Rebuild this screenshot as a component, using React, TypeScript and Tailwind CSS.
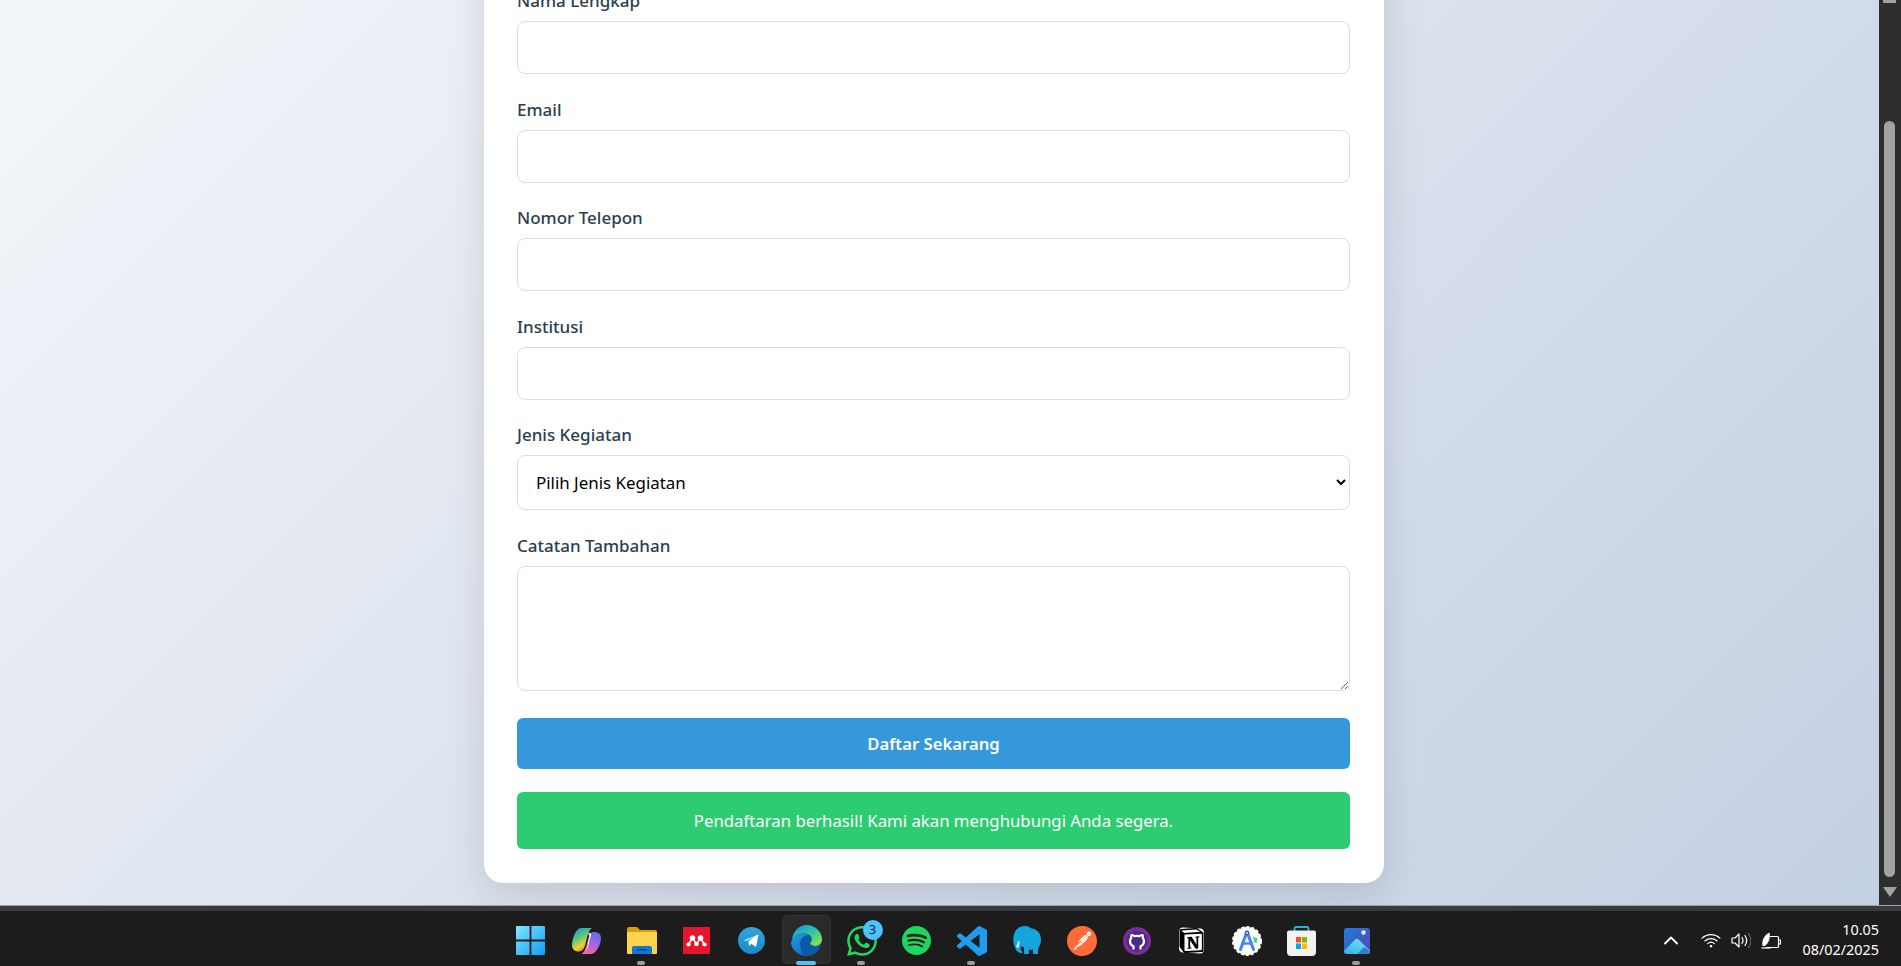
import React from "react";
import { SiPostman, SiSpotify, SiWhatsapp, SiNotion } from "react-icons/si";

const uiFont = "font-['Noto_Sans','Open_Sans',sans-serif]";

function Field({ label, className, children }: { label: string; className: string; children: React.ReactNode }) {
  return (
    <div className={`flex flex-col ${className}`}>
      <label className="mb-[9px] h-[22px] text-[17px] leading-[22px] font-medium text-[#2c3e50]">{label}</label>
      {children}
    </div>
  );
}

const inputClass =
  "h-[53px] w-full rounded-[8px] border border-[#dddddd] bg-white px-[19px] text-[17px] outline-none";

function StartIcon() {
  return (
    <svg className="-ml-[2px]" width="29" height="29" viewBox="0 0 29 29">
      <defs>
        <linearGradient id="win" x1="0" y1="0" x2="1" y2="1">
          <stop offset="0" stopColor="#7fe9ff" />
          <stop offset="1" stopColor="#0f9bf5" />
        </linearGradient>
      </defs>
      <path d="M1 0h12.6v13.6H0V1a1 1 0 0 1 1-1zM15.4 0H28a1 1 0 0 1 1 1v12.6H15.400zM0 15.400h13.600V29H1a1 1 0 0 1-1-1zM15.400 15.400H29V28a1 1 0 0 1-1 1H15.400z" fill="url(#win)" />
    </svg>
  );
}

function CopilotIcon() {
  return (
    <svg width="29" height="26" viewBox="0 0 29 26">
      <defs>
        <linearGradient id="cpA" x1="0.1" y1="0" x2="0.6" y2="1">
          <stop offset="0" stopColor="#1d8fe0" />
          <stop offset="0.45" stopColor="#5fcb78" />
          <stop offset="0.75" stopColor="#f6cf2e" />
          <stop offset="1" stopColor="#ef7a30" />
        </linearGradient>
        <linearGradient id="cpB" x1="0.8" y1="0" x2="0.3" y2="1">
          <stop offset="0" stopColor="#5d6fe4" />
          <stop offset="0.5" stopColor="#a861e2" />
          <stop offset="1" stopColor="#f06c9f" />
        </linearGradient>
      </defs>
      <path d="M21 4c4.500-.5 8 1.500 8 6 0 3.500-1.500 8-3.500 11-1.800 3-4 5-7.500 5H9.500c2.500-2 3.500-4 4.500-7l3-11c.6-2 2-3.800 4-4z" fill="url(#cpB)" />
      <path d="M9.500 0h10.500c-2.500 1.500-3.500 4-4.200 6.500l-3 11.500c-.8 3-2.800 5.500-6.300 5.500-4 0-6.500-2.500-6.500-6.500C0 13 1.500 8.500 3 5.500 4.500 2 6.500 0 9.500 0z" fill="url(#cpA)" />
      <path d="M16 5c2-.5 3.500.3 3.200 2l-3 11c-.6 2.500-2 4.500-3.700 5.500 0 0 2-1.500 2.500-5l2-9c.2-1.500-.3-3.500-1-4.500z" fill="#e9dcf7" />
    </svg>
  );
}

function FolderIcon() {
  return (
    <svg width="30" height="27" viewBox="0 0 30 27">
      <path d="M0 2a2 2 0 0 1 2-2h8l3 3h15a2 2 0 0 1 2 2v3H0z" fill="#d99e0b" />
      <path d="M0 5h30v21a1 1 0 0 1-1 1H1a1 1 0 0 1-1-1z" fill="#fdd34d" />
      <path d="M5 21a2 2 0 0 1 2-2h16a2 2 0 0 1 2 2v6H5z" fill="#0f78d4" />
      <rect x="10" y="22" width="10" height="1.400" fill="#083f78" />
    </svg>
  );
}

function MendeleyIcon() {
  return (
    <svg width="27" height="27" viewBox="0 0 27 27">
      <rect width="27" height="27" fill="#e6152d" />
      <circle cx="9.500" cy="11" r="2.800" fill="#fff" />
      <circle cx="17.500" cy="11" r="2.800" fill="#fff" />
      <circle cx="5.500" cy="17.500" r="2.100" fill="#fff" />
      <circle cx="13.500" cy="17" r="2.300" fill="#fff" />
      <circle cx="21.500" cy="17.500" r="2.100" fill="#fff" />
      <path d="M5.500 17.500 9.500 11l4 6 4-6 4 6.500" fill="none" stroke="#fff" strokeWidth="1.500" />
    </svg>
  );
}

function TelegramIcon() {
  return (
    <svg width="27" height="27" viewBox="0 0 27 27">
      <defs>
        <linearGradient id="tg" x1="0.5" y1="0" x2="0.5" y2="1">
          <stop offset="0" stopColor="#2fa6dc" />
          <stop offset="1" stopColor="#1c88c6" />
        </linearGradient>
      </defs>
      <circle cx="13.500" cy="13.500" r="13.500" fill="url(#tg)" />
      <path d="M5.500 13.500 20.500 7.500 18 20l-4.600-3.300-2.200 2.200-.8-4.700 7-5.200-9 4.700z" fill="#fff" />
    </svg>
  );
}

function EdgeIcon() {
  return (
    <svg width="31" height="31" viewBox="0 0 31 31">
      <defs>
        <linearGradient id="edgeA" x1="0.2" y1="0" x2="0.9" y2="0.8">
          <stop offset="0" stopColor="#1a9bd8" />
          <stop offset="0.55" stopColor="#31c5a5" />
          <stop offset="1" stopColor="#7fe04f" />
        </linearGradient>
        <linearGradient id="edgeB" x1="0" y1="0" x2="0.6" y2="1">
          <stop offset="0" stopColor="#1ea1e6" />
          <stop offset="1" stopColor="#0f6cc0" />
        </linearGradient>
      </defs>
      <path d="M15.500 0C24 0 31 6.500 31 14.500c0 4-3 6.500-7 6.500-3 0-5-1-5-2.500 0-1 1.500-1.500 1.500-4 0-3.500-3-6-7-6C8 8.500 3.500 11 1 15.500 1.500 7 7.500 0 15.500 0z" fill="url(#edgeA)" />
      <path d="M1 15.500C3.500 11 8 8.500 13.500 8.500c2 0 3.800.6 5 1.700C13 10 9.500 14 9.500 18.500c0 5 4 10 9.500 11.800-1.200.4-2.400.7-3.500.7C7 31 0 24 0 17c0-.5.500-1 1-1.500z" fill="url(#edgeB)" />
      <path d="M9.500 18.500c0-4.500 3.500-8.500 9-8.300 1.300 1 2 2.500 2 4.300 0 2.500-1.500 3-1.500 4 0 1.500 2 2.500 5 2.500 2.500 0 4.800-.8 6.200-2.300C29 26 23.500 31 15.500 31c-.5 0-2-.2-3-.8-2-2-3-7-3-11.700z" fill="#0c5aa6" />
    </svg>
  );
}

function ElephantIcon() {
  return (
    <svg width="28" height="29" viewBox="0 0 28 29">
      <path d="M12 0c3 0 5 1 6.500 2.500C23 2.500 28 6.500 28 13.500c0 4-1.500 7-3 9v5.500h-5v-4.500c-1.500.5-3 .5-4 0V28h-5v-7c-1 .5-2 0-2.500-1l-1 2c.2 2 1 3 2 4l-.5 1.500C6 27 3 25 2 21.500 .5 18 0 14 .5 10.500 1.300 4 6 0 12 0z" fill="#14a5dc" />
      <path d="M5 15c-.5 2-1 4-2 5.500l2 2c1-2 1.500-4.500 1.500-7.500z" fill="#cfeefb" />
    </svg>
  );
}

function PostmanIcon() {
  return (
    <span className="relative flex h-[30px] w-[30px] items-center justify-center">
      <span className="absolute h-[26px] w-[26px] rounded-full bg-white" />
      <SiPostman className="relative h-[30px] w-[30px] text-[#ff6c37]" />
    </span>
  );
}

function GithubDesktopIcon() {
  return (
    <svg width="28" height="28" viewBox="0 0 28 28">
      <circle cx="14" cy="14" r="14" fill="#7b2d9e" />
      <circle cx="14" cy="14" r="10.500" fill="#4a2a86" />
      <path d="M10.500 22.500v-3.200c-2-.8-3.500-2.500-3.500-5 0-1.500.5-2.500 1.200-3.300-.2-1-.1-2 .3-3 1.200 0 2.200.6 3 1.200.8-.2 1.600-.3 2.500-.3s1.700.1 2.500.3c.8-.6 1.800-1.200 3-1.200.4 1 .5 2 .3 3 .7.8 1.200 1.800 1.200 3.300 0 2.500-1.500 4.200-3.500 5v3.200" fill="none" stroke="#fff" strokeWidth="2.200" strokeLinejoin="round" />
    </svg>
  );
}

function NotionIcon() {
  return (
    <span className="relative flex h-[25px] w-[25px] items-center justify-center">
      <span className="absolute h-[21px] w-[21px] skew-y-[4deg] rounded-[2px] bg-white ring-2 ring-white" />
      <SiNotion className="relative h-[25px] w-[25px] text-black" />
    </span>
  );
}

function AndroidStudioIcon() {
  return (
    <svg width="30" height="30" viewBox="0 0 30 30">
      <circle cx="15" cy="15" r="14" fill="#fff" stroke="#fff" strokeWidth="2" strokeDasharray="3 2" />
      <path d="M14.500 7 8.500 23.500M15.500 7l6 16.500" fill="none" stroke="#4285f4" strokeWidth="3" strokeLinecap="round" />
      <path d="M9 17.500h12" fill="none" stroke="#4285f4" strokeWidth="2.400" />
      <circle cx="15" cy="7" r="2.400" fill="#2f5fb8" />
      <circle cx="15" cy="7" r="0.900" fill="#fff" />
      <path d="M21 10.500l4.500 2-1 4.500-2.500-.5z" fill="#3ddc84" />
    </svg>
  );
}

function StoreIcon() {
  return (
    <svg width="29" height="30" viewBox="0 0 29 30">
      <path d="M7.500 6V2.500a1.500 1.500 0 0 1 1.500-1.500h11a1.500 1.500 0 0 1 1.500 1.500V6" fill="none" stroke="#1fb4ec" strokeWidth="1.800" />
      <path d="M0 6.500a2 2 0 0 1 2-2h25a2 2 0 0 1 2 2V26a4 4 0 0 1-4 4H4a4 4 0 0 1-4-4z" fill="#f4f2ee" />
      <rect x="9" y="11" width="5" height="5.500" fill="#f25022" />
      <rect x="15" y="11" width="5" height="5.500" fill="#7fba00" />
      <rect x="9" y="17.500" width="5" height="5.500" fill="#00a4ef" />
      <rect x="15" y="17.500" width="5" height="5.500" fill="#ffb900" />
    </svg>
  );
}

function PhotosIcon() {
  return (
    <svg width="26" height="26" viewBox="0 0 26 26">
      <defs>
        <linearGradient id="phBg" x1="0" y1="0" x2="1" y2="1">
          <stop offset="0" stopColor="#1e7fdc" />
          <stop offset="1" stopColor="#5a3fb0" />
        </linearGradient>
        <linearGradient id="phM" x1="0" y1="1" x2="1" y2="0">
          <stop offset="0" stopColor="#1fb6e8" />
          <stop offset="1" stopColor="#8fe3f5" />
        </linearGradient>
      </defs>
      <rect width="26" height="26" rx="3" fill="url(#phBg)" />
      <circle cx="19.500" cy="4.500" r="2.200" fill="#e8eef8" />
      <path d="M0 23 11 11.500c1-1 2.500-1 3.500 0L26 22.500V23a3 3 0 0 1-3 3H3a3 3 0 0 1-3-3z" fill="url(#phM)" />
      <path d="M13 26l6-6c1-1 2-1 3 0l4 3a3 3 0 0 1-3 3z" fill="#2f7fd6" />
    </svg>
  );
}

function VsCodeIcon() {
  return (
    <svg width="30" height="30" viewBox="0 0 24 24">
      <path d="M23.150 2.587 18.210.21a1.494 1.494 0 0 0-1.705.29l-9.460 8.630-4.120-3.128a.999.999 0 0 0-1.276.057L.327 7.261A1 1 0 0 0 .326 8.740L3.899 12 .326 15.260a1 1 0 0 0 .001 1.479L1.650 17.940a.999.999 0 0 0 1.276.057l4.120-3.128 9.460 8.630a1.492 1.492 0 0 0 1.704.29l4.942-2.377A1.500 1.500 0 0 0 24 20.060V3.939a1.500 1.500 0 0 0-.85-1.352zm-5.146 14.861L10.826 12l7.178-5.448v10.896z" fill="#1f9cf0" />
    </svg>
  );
}

function WhatsappIcon() {
  return (
    <span className="relative flex h-[30px] w-[30px] items-center justify-center">
      <SiWhatsapp className="h-[30px] w-[30px] text-[#25d366]" />
      <span className="absolute -top-[6px] -right-[6px] flex h-[20px] w-[20px] items-center justify-center rounded-full bg-[#4cc2ff] text-[13px] leading-none text-[#10222e]">
        3
      </span>
    </span>
  );
}

type TaskItem = { icon: React.ReactNode; dot?: boolean; active?: boolean };

const taskItems: TaskItem[] = [
  { icon: <StartIcon /> },
  { icon: <CopilotIcon /> },
  { icon: <FolderIcon />, dot: true },
  { icon: <MendeleyIcon /> },
  { icon: <TelegramIcon /> },
  { icon: <EdgeIcon />, active: true },
  { icon: <WhatsappIcon />, dot: true },
  { icon: <SiSpotify className="h-[29px] w-[29px] text-[#1ed760]" /> },
  { icon: <VsCodeIcon />, dot: true },
  { icon: <ElephantIcon /> },
  { icon: <PostmanIcon /> },
  { icon: <GithubDesktopIcon /> },
  { icon: <NotionIcon /> },
  { icon: <AndroidStudioIcon /> },
  { icon: <StoreIcon /> },
  { icon: <PhotosIcon />, dot: true },
];

function TaskButton({ item }: { item: TaskItem }) {
  return (
    <div className="relative flex h-[55px] w-[55px] items-center justify-center pt-[4px]">
      {item.active && (
        <span className="absolute top-[4px] left-[3px] h-[49px] w-[49px] rounded-[5px] border border-[#333333] bg-[#2a2a2a]" />
      )}
      <span className="relative flex">{item.icon}</span>
      {item.dot && <span className="absolute bottom-[1px] left-[23px] h-[4px] w-[8px] rounded-full bg-[#9d9d9d]" />}
      {item.active && <span className="absolute bottom-[1px] left-[17px] h-[4px] w-[20px] rounded-full bg-[#4cc2ff]" />}
    </div>
  );
}

function Tray() {
  return (
    <div className="flex items-center pt-[3px] text-white">
      <svg className="mr-[23px]" width="14" height="9" viewBox="0 0 14 9" fill="none" stroke="#fff" strokeWidth="1.800" strokeLinecap="round" strokeLinejoin="round">
        <path d="M1 7.500 7 1.500l6 6" />
      </svg>
      <svg className="mr-[10px]" width="20" height="15" viewBox="0 0 21 16" fill="none" stroke="#fff" strokeWidth="1.300" strokeLinecap="round">
        <path d="M1 5.500C6.500.5 14.500.5 20 5.500" />
        <path d="M4 8.500c3.800-3.300 9.200-3.300 13 0" />
        <path d="M7 11.300c2-1.800 5-1.800 7 0" />
        <circle cx="10.500" cy="14" r="1.300" fill="#fff" stroke="none" />
      </svg>
      <svg className="mr-[10px]" width="20" height="17" viewBox="0 0 20 17" fill="none" stroke="#fff" strokeWidth="1.200">
        <path d="M1 6h3l4-4v13l-4-4H1z" strokeLinejoin="round" />
        <path d="M11 5.500c1.200 1.700 1.200 4.300 0 6" strokeLinecap="round" />
        <path d="M14 3.500c2 3 2 7 0 10" strokeLinecap="round" />
        <path d="M17.500 1.500c3 4.200 3 9.800 0 14" stroke="#666" strokeLinecap="round" />
      </svg>
      <svg className="mr-[18px]" width="20" height="17" viewBox="0 0 20 17" fill="none" stroke="#fff" strokeWidth="1.200">
        <path d="M9 4.500h7.500a1 1 0 0 1 1 1v9a1 1 0 0 1-1 1H5" />
        <path d="M18 8h1.500v4H18" />
        <path d="M.5 16h9" />
        <path d="M1.500 14C.5 8 3.500 3 8.500.5c1 5.500-.5 11-5 13.500z" fill="#fff" stroke="none" />
      </svg>
      <div className="w-[80px] text-right text-[14.4px] leading-[20px] text-white">
        <div>10.05</div>
        <div>08/02/2025</div>
      </div>
    </div>
  );
}

function App() {
  return (
    <div className={`flex h-[966px] w-[1901px] flex-col overflow-hidden bg-[#1c1c1c] ${uiFont}`}>
      <div className="flex h-[906px] shrink-0 border-b border-[#9aa3b2]">
        <div className="flex h-full w-[1879px] flex-col justify-end overflow-hidden">
          <div className="h-[1012px] shrink-0 bg-[linear-gradient(135deg,#f5f7fa_0%,#c3cfe2_100%)] pb-[22px] pl-[484px]">
            <div className="flex h-full w-[900px] flex-col justify-end rounded-[19px] bg-white pr-[34px] pb-[34px] pl-[33px] shadow-[0_12px_38px_rgba(0,0,0,0.12)]">
              <Field label="Nama Lengkap" className="mb-[24.67px]">
                <input type="text" className={inputClass} />
              </Field>
              <Field label="Email" className="mb-[24.67px]">
                <input type="email" className={inputClass} />
              </Field>
              <Field label="Nomor Telepon" className="mb-[24.67px]">
                <input type="tel" className={inputClass} />
              </Field>
              <Field label="Institusi" className="mb-[24px]">
                <input type="text" className={inputClass} />
              </Field>
              <Field label="Jenis Kegiatan" className="mb-[25px]">
                <select className="h-[55px] w-full rounded-[8px] border border-[#dddddd] bg-white px-[14px] text-[16.9px] text-black outline-none">
                  <option>Pilih Jenis Kegiatan</option>
                </select>
              </Field>
              <Field label="Catatan Tambahan" className="mb-[27px]">
                <textarea className="block h-[125px] w-full rounded-[8px] border border-[#dddddd] bg-white px-[19px] py-[15px] outline-none" />
              </Field>
              <button className="h-[51px] w-full rounded-[6px] bg-[#3498db] text-[16.7px] font-semibold text-white">
                Daftar Sekarang
              </button>
              <div className="mt-[23px] flex h-[57px] items-center justify-center rounded-[6px] bg-[#2ecc71] text-[16.75px] text-white">
                Pendaftaran berhasil! Kami akan menghubungi Anda segera.
              </div>
            </div>
          </div>
        </div>
        <div className="flex w-[22px] flex-col items-center bg-[#2e2e2e] pr-[1px]">
          <div className="h-[3px] w-[13px] rounded-b-[1px] bg-[#a3a3a3]" />
          <div className="mt-[118px] h-[756px] w-[11px] rounded-full bg-[#a3a3a3]" />
          <div className="mt-[10px] h-0 w-0 border-x-[7px] border-t-[10px] border-x-transparent border-t-[#a3a3a3]" />
        </div>
      </div>
      <div className="h-[5px] shrink-0 bg-[#3a3a3a]" />
      <div className="relative flex h-[55px] shrink-0 items-center justify-end pr-[22px]">
        <div className="absolute top-0 left-[504px] flex">
          {taskItems.map((item, i) => (
            <TaskButton key={i} item={item} />
          ))}
        </div>
        <Tray />
      </div>
    </div>
  );
}

export default App;
